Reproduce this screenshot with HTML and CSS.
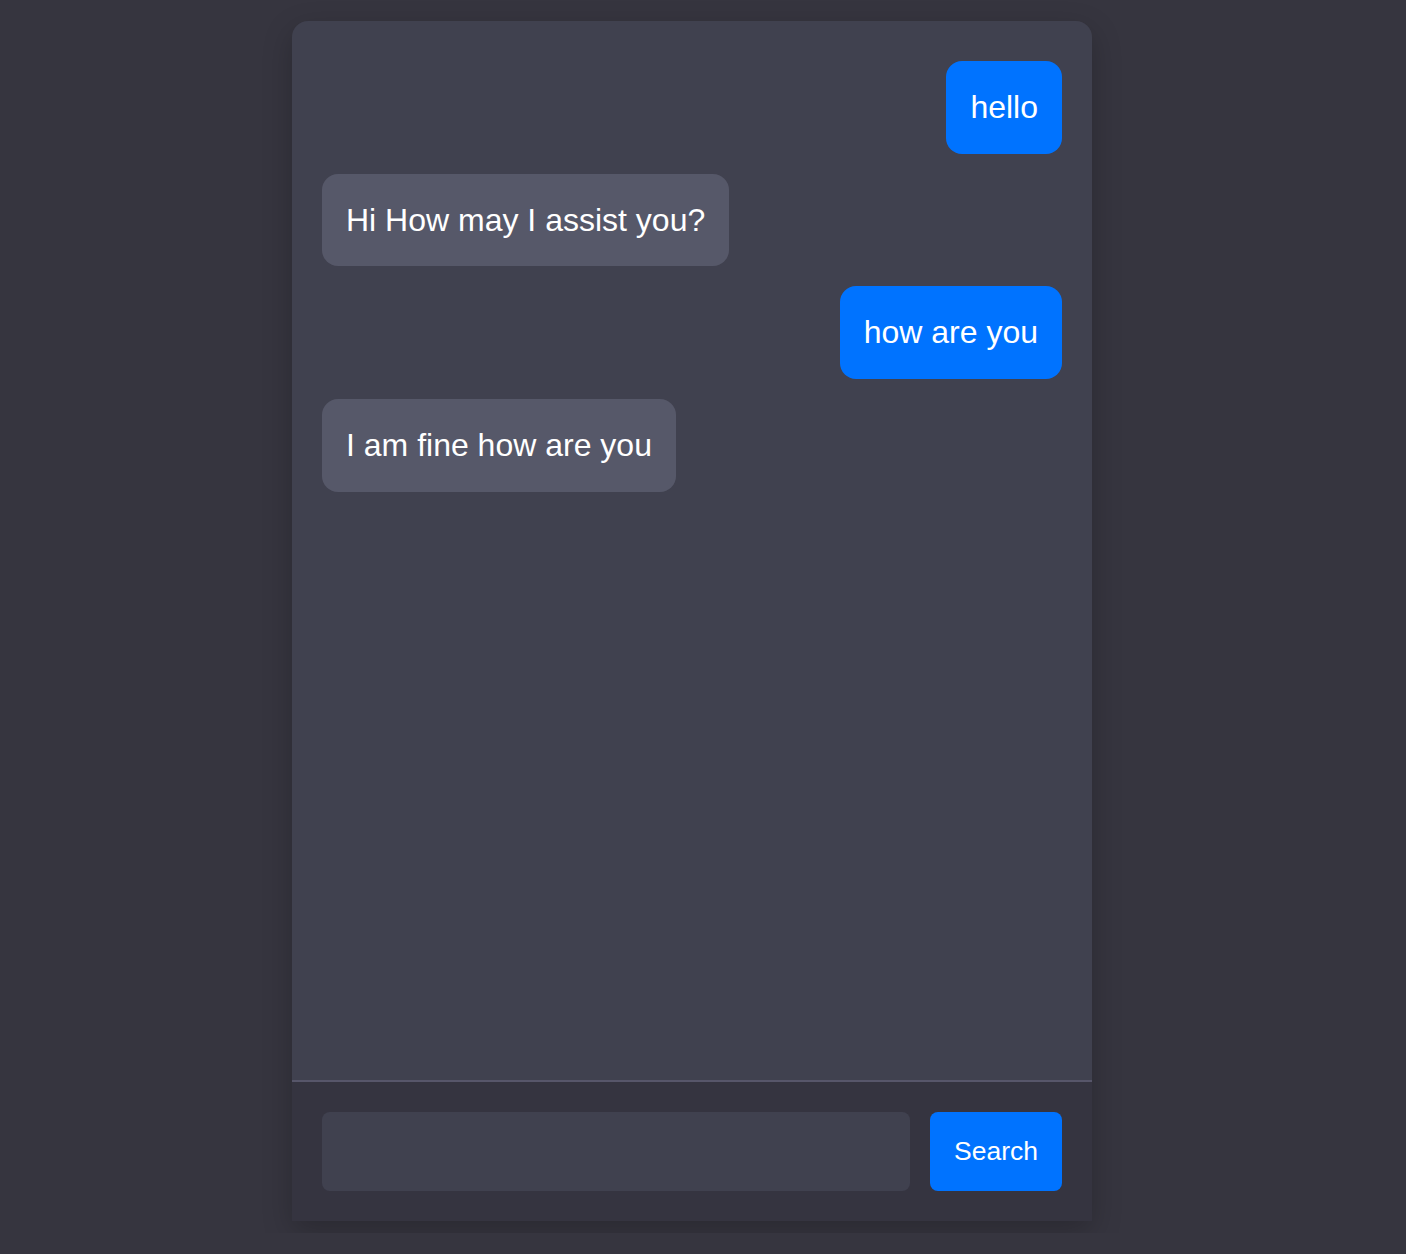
FILE: index.html
```html
<!DOCTYPE html>
<html lang="en">
<head>
<meta charset="utf-8">
<title>Chat</title>
<link rel="stylesheet" href="styles.css">
</head>
<body>
<div class="page">
  <div class="chat">
    <div class="messages">
      <div class="msg user">hello</div>
      <div class="msg bot">Hi How may I assist you?</div>
      <div class="msg user">how are you</div>
      <div class="msg bot">I am fine how are you</div>
    </div>
    <form class="composer">
      <input class="field" type="text">
      <button class="send" type="button">Search</button>
    </form>
  </div>
</div>
</body>
</html>
```

FILE: styles.css
```css
html, body {
  margin: 0;
  padding: 0;
  background: #36353f;
  font-family: "Liberation Sans", Arial, Helvetica, sans-serif;
}

.page {
  display: flex;
  justify-content: center;
  padding: 21px 22px 0 0;
  min-height: 1233px;
  box-sizing: border-box;
}

.chat {
  width: 800px;
  height: 1200px;
  display: flex;
  flex-direction: column;
  background: #40414f;
  border-radius: 16px 16px 0 0;
  box-shadow: 0 10px 30px rgba(0, 0, 0, 0.22);
  overflow: hidden;
}

.messages {
  flex: 1;
  display: flex;
  flex-direction: column;
  padding: 30px;
  border-bottom: 2px solid #57566a;
}

.msg {
  margin: 10px 0;
  padding: 28px 24px;
  font-size: 32px;
  line-height: 36.67px;
  color: #ffffff;
  border-radius: 16px;
  max-width: 80%;
}

.msg.user {
  align-self: flex-end;
  background: #0073ff;
}

.msg.bot {
  align-self: flex-start;
  background: #565869;
}

.composer {
  display: flex;
  gap: 20px;
  padding: 30px;
  margin: 0;
  background: #353440;
}

.field {
  flex: 1;
  height: 79px;
  box-sizing: border-box;
  border: none;
  border-radius: 8px;
  background: #40414f;
  color: #fff;
  font-family: inherit;
  font-size: 26px;
  padding: 0 20px;
  outline: none;
}

.send {
  height: 79px;
  padding: 0 24px;
  border: none;
  border-radius: 8px;
  background: #0073ff;
  color: #ffffff;
  font-family: inherit;
  font-size: 26.5px;
}
```
